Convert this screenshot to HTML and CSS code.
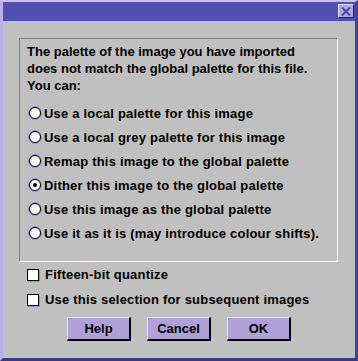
FILE: index.html
```html
<!DOCTYPE html>
<html lang="en">

<head>
  <meta charset="UTF-8">
  <title>Import Palette</title>
  <link rel="stylesheet" href="styles.css">
</head>

<body>
  <div class="window">
    <div class="titlebar">
      <button class="closeBtn" aria-label="Close">
        <svg width="10" height="9" viewBox="0 0 10 9">
          <path d="M1 0.5 L9 8.5 M9 0.5 L1 8.5" stroke="#4848a8" stroke-width="2" fill="none" />
        </svg>
      </button>
    </div>

    <div class="content">
      <div class="panel">
        <p class="intro">The palette of the image you have imported<br>does not match the global palette for this file.<br>You can:</p>

        <label class="option"><span class="radio"></span>Use a local palette for this image</label>
        <label class="option"><span class="radio"></span>Use a local grey palette for this image</label>
        <label class="option"><span class="radio"></span>Remap this image to the global palette</label>
        <label class="option"><span class="radio checked"></span>Dither this image to the global palette</label>
        <label class="option"><span class="radio"></span>Use this image as the global palette</label>
        <label class="option"><span class="radio"></span>Use it as it is (may introduce colour shifts).</label>
      </div>

      <div class="checks">
        <label class="option"><span class="check"></span>Fifteen-bit quantize</label>
        <label class="option"><span class="check"></span>Use this selection for subsequent images</label>
      </div>

      <div class="buttons">
        <button class="btn">Help</button>
        <button class="btn">Cancel</button>
        <button class="btn">OK</button>
      </div>
    </div>
  </div>
</body>

</html>
```

FILE: styles.css
```css
body {
  margin: 0;
  background-color: #c0c0c0;
  font-family: "Liberation Sans", Arial, sans-serif;
  font-weight: bold;
  font-size: 13px;
  color: black;
}

.window {
  width: 358px;
  height: 361px;
  box-sizing: border-box;
  border-top: 2px solid #c8c0f0;
  border-left: 3px solid #b8b0e8;
  border-right: 3px solid #4040a0;
  border-bottom: 3px solid #383890;
  background-color: #c0c0c0;
}

.titlebar {
  height: 19px;
  background-color: #5050b0;
  display: flex;
  justify-content: flex-end;
  align-items: flex-start;
  padding: 2px 1px 0 0;
  box-sizing: border-box;
}

.closeBtn {
  width: 16px;
  height: 14px;
  padding: 0;
  background-color: #b0a8e0;
  border: 1px solid;
  border-color: #e0dcf8 #202060 #202060 #e0dcf8;
  display: flex;
  align-items: center;
  justify-content: center;
}

.content {
  padding: 17px 17px 0 16px;
}

.panel {
  border-top: 1px solid #808080;
  border-left: 1px solid #808080;
  border-right: 1px solid white;
  border-bottom: 1px solid white;
  padding: 4px 4px 16px 7px;
}

.intro {
  margin: 0 0 7px 0;
  line-height: 17px;
}

.option {
  display: flex;
  align-items: center;
  height: 24px;
  gap: 3px;
  white-space: nowrap;
  letter-spacing: 0.2px;
}

.radio {
  width: 10px;
  height: 10px;
  border-radius: 50%;
  background-color: white;
  border: 1px solid black;
  box-shadow: 0 0 0 1px #9890d0;
  margin-left: 2px;
  display: flex;
  align-items: center;
  justify-content: center;
}

.radio.checked::after {
  content: "";
  width: 4px;
  height: 4px;
  border-radius: 50%;
  background-color: black;
}

.checks {
  padding: 0 0 0 8px;
}

.checks .option {
  height: 25px;
}

.check {
  width: 10px;
  height: 10px;
  background-color: white;
  border: 1px solid black;
  box-shadow: 1px 1px 0 0 #9890d0;
  margin-right: 3px;
}

.buttons {
  display: flex;
  gap: 16px;
  padding: 5px 0 0 48px;
}

.btn {
  width: 64px;
  height: 24px;
  background-color: #b0a0d8;
  font-family: "Liberation Sans", Arial, sans-serif;
  font-weight: bold;
  font-size: 13px;
  color: black;
  border-style: solid;
  border-width: 1px 2px 2px 1px;
  border-color: #e8e0ff black black #e8e0ff;
  padding: 0;
}
```
